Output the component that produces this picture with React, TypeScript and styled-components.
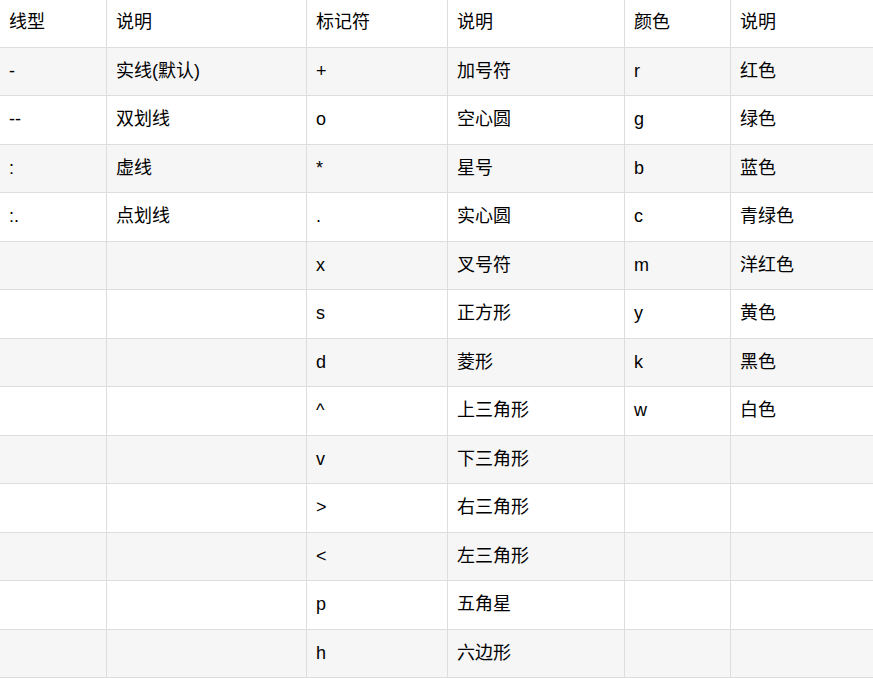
import React from "react";
import styled, { createGlobalStyle } from "styled-components";

const Global = createGlobalStyle`
  html, body { margin: 0; padding: 0; background: #fff; }
  body { font-family: "Liberation Sans", "Noto Sans CJK SC", sans-serif; overflow: hidden; }
`;

const Wrap = styled.div`
  margin: -2px 0 0 -1px;
`;

const Table = styled.table`
  border-collapse: collapse;
  table-layout: fixed;
  width: 874px;
  font-size: 18px;
  color: #000;
`;

const Row = styled.tr<{ $alt?: boolean }>`
  background: ${(p) => (p.$alt ? "#f6f6f6" : "#fff")};
`;

const Cell = styled.td`
  border: 1px solid #dddddd;
  padding: 10px 9px;
  line-height: 27.5px;
  text-align: left;
  vertical-align: middle;
  white-space: nowrap;
`;

const Head = styled(Cell).attrs({ as: "th" })`
  font-weight: normal;
`;

const cols = [107, 200, 141, 177, 106, 143];

const header = ["线型", "说明", "标记符", "说明", "颜色", "说明"];

const rows: string[][] = [
  ["-", "实线(默认)", "+", "加号符", "r", "红色"],
  ["--", "双划线", "o", "空心圆", "g", "绿色"],
  [":", "虚线", "*", "星号", "b", "蓝色"],
  [":.", "点划线", ".", "实心圆", "c", "青绿色"],
  ["", "", "x", "叉号符", "m", "洋红色"],
  ["", "", "s", "正方形", "y", "黄色"],
  ["", "", "d", "菱形", "k", "黑色"],
  ["", "", "^", "上三角形", "w", "白色"],
  ["", "", "v", "下三角形", "", ""],
  ["", "", ">", "右三角形", "", ""],
  ["", "", "<", "左三角形", "", ""],
  ["", "", "p", "五角星", "", ""],
  ["", "", "h", "六边形", "", ""],
];

export default function App() {
  return (
    <>
      <Global />
      <Wrap>
        <Table>
          <colgroup>
            {cols.map((w, i) => (
              <col key={i} style={{ width: w }} />
            ))}
          </colgroup>
          <thead>
            <Row>
              {header.map((h, i) => (
                <Head key={i}>{h}</Head>
              ))}
            </Row>
          </thead>
          <tbody>
            {rows.map((r, i) => (
              <Row key={i} $alt={i % 2 === 0}>
                {r.map((c, j) => (
                  <Cell key={j}>{c}</Cell>
                ))}
              </Row>
            ))}
          </tbody>
        </Table>
      </Wrap>
    </>
  );
}
